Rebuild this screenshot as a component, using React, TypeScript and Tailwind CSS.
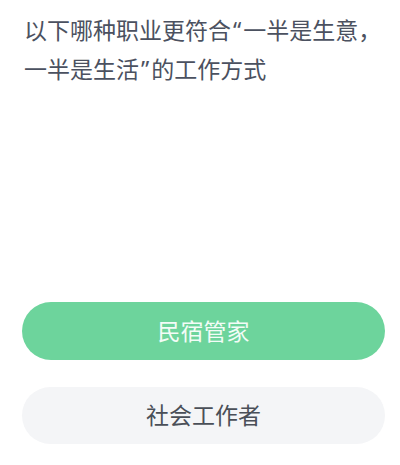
export default function App() {
  return (
    <div className="w-[400px] h-[465px] bg-white flex flex-col font-['Noto_Sans','Noto_Sans_CJK_SC',sans-serif]">
      <div className="pl-[24px] pr-[14px] pt-[11px] text-[23px] leading-[38.5px] text-[#4b5160]">
        以下哪种职业更符合<span className="mx-[2px]">“</span>一半是生意，一半是生活<span className="mx-[2px]">”</span>的工作方式
      </div>
      <div className="mt-[214px] pl-[22px] pr-[15px] flex flex-col gap-[27px]">
        <div className="h-[58px] rounded-full bg-[#6dd49c] flex items-center justify-center text-[23px] text-[#f3fcf7]">
          民宿管家
        </div>
        <div className="h-[57px] rounded-full bg-[#f4f5f7] flex items-center justify-center text-[23px] text-[#4a4f58]">
          社会工作者
        </div>
      </div>
    </div>
  );
}
